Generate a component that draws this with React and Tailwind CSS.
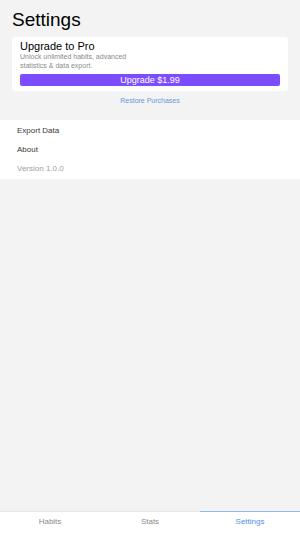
export default function App() {
  const tabs = ['Habits', 'Stats', 'Settings'];
  const active = 'Settings';

  return (
    <div className="h-[533px] w-[300px] flex flex-col bg-[#f3f3f3] font-['Liberation_Sans',Arial,sans-serif]">
      <main className="flex-1 flex flex-col">
        <h1 className="px-3 pt-[9px] text-[19px] leading-[22px] text-black">Settings</h1>

        {/* Upgrade card */}
        <div className="mx-3 mt-[6px] bg-white rounded-[3px] px-2 pt-[3px] pb-[5px]">
          <div className="text-[11px] leading-[12px] text-black">Upgrade to Pro</div>
          <p className="w-[114px] text-[7px] leading-[9px] text-[#8a8a8a]">
            Unlock unlimited habits, advanced statistics &amp; data export.
          </p>
          <button className="mt-[4px] block w-full h-[12px] rounded-[2px] bg-[#7c4dff] text-white text-[9px] leading-[12px]">
            Upgrade $1.99
          </button>
        </div>

        <button className="mt-[5px] self-center text-[7px] leading-[9px] text-[#6197de]">
          Restore Purchases
        </button>

        {/* Options */}
        <div className="mt-[15px] bg-white px-[17px] py-[1px]">
          <div className="h-[19px] flex items-center text-[8px] text-[#3a3a3a]">Export Data</div>
          <div className="h-[19px] flex items-center text-[8px] text-[#3a3a3a]">About</div>
          <div className="h-[19px] flex items-center text-[8px] text-[#a0a0a0]">Version 1.0.0</div>
        </div>
      </main>

      {/* Tab bar */}
      <nav className="h-[22px] bg-white border-t border-[#e6e6e6] flex">
        {tabs.map((t) => (
          <div
            key={t}
            className={
              t === active
                ? 'flex-1 flex items-center justify-center pb-[2px] text-[8px] text-[#4f8fe8] border-t border-[#8fb6ee] -mt-px'
                : 'flex-1 flex items-center justify-center pb-[2px] text-[8px] text-[#8a8a8a]'
            }
          >
            {t}
          </div>
        ))}
      </nav>
    </div>
  );
}
